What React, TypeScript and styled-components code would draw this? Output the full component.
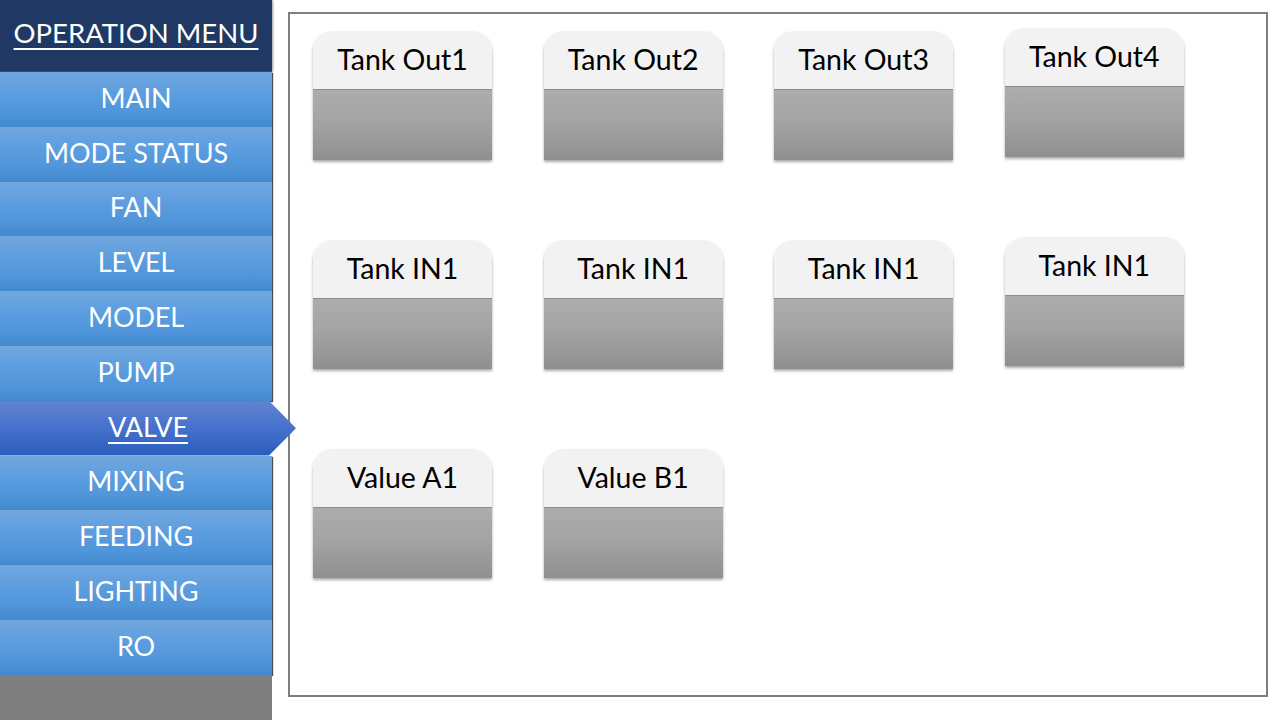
import styled, { createGlobalStyle } from "styled-components";

const GlobalStyle = createGlobalStyle`
  html, body {
    margin: 0;
    padding: 0;
    background: #ffffff;
    font-family: Lato, "Open Sans", "Liberation Sans", sans-serif;
  }
  * {
    box-sizing: border-box;
  }
`;

const menuItems = [
  "MAIN",
  "MODE STATUS",
  "FAN",
  "LEVEL",
  "MODEL",
  "PUMP",
  "VALVE",
  "MIXING",
  "FEEDING",
  "LIGHTING",
  "RO",
];

// raised: the last card in a row sits a few px higher in the original
const cards = [
  { id: 1, title: "Tank Out1" },
  { id: 2, title: "Tank Out2" },
  { id: 3, title: "Tank Out3" },
  { id: 4, title: "Tank Out4", raised: true },
  { id: 5, title: "Tank IN1" },
  { id: 6, title: "Tank IN1" },
  { id: 7, title: "Tank IN1" },
  { id: 8, title: "Tank IN1", raised: true },
  { id: 9, title: "Value A1" },
  { id: 10, title: "Value B1" },
];

export default function App() {
  const active = "VALVE";

  return (
    <>
      <GlobalStyle />
      <Screen>
        <Sidebar>
          <MenuHeader>
            <HeaderLabel>OPERATION MENU</HeaderLabel>
          </MenuHeader>
          {menuItems.map((item) => (
            <MenuItem key={item} $active={item === active}>
              <ItemLabel $active={item === active}>{item}</ItemLabel>
            </MenuItem>
          ))}
          <SidebarFooter />
        </Sidebar>
        <MainArea>
          <Panel>
            <CardGrid>
              {cards.map((card) => (
                <Card key={card.id} $raised={!!card.raised}>
                  <CardHeader>{card.title}</CardHeader>
                  <CardBody />
                </Card>
              ))}
            </CardGrid>
          </Panel>
        </MainArea>
      </Screen>
    </>
  );
}

const Screen = styled.div`
  display: flex;
  width: 1280px;
  height: 720px;
  overflow: hidden;
`;

// 왼쪽 메뉴
const Sidebar = styled.div`
  position: relative;
  z-index: 1;
  display: flex;
  flex-direction: column;
  width: 272px;
  flex-shrink: 0;
  height: 720px;
`;

const MenuHeader = styled.div`
  display: flex;
  justify-content: center;
  align-items: center;
  height: 72px;
  padding-bottom: 6px;
  background-color: #1f3864;
  border-bottom: 1px solid #3a4a66;
  box-shadow: 1px 0 2px rgba(0, 0, 0, 0.4);
`;

const HeaderLabel = styled.span`
  color: #ffffff;
  font-size: 27.5px;
  text-decoration: underline;
  text-underline-offset: 5px;
  text-decoration-thickness: 2px;
`;

const MenuItem = styled.div<{ $active: boolean }>`
  display: flex;
  justify-content: center;
  align-items: center;
  height: 54.8px;
  padding-bottom: 4px;
  flex-shrink: 0;
  width: ${(p) => (p.$active ? "296px" : "272px")};
  background: ${(p) =>
    p.$active
      ? "linear-gradient(to bottom, #6282d0 0%, #4873cc 45%, #3565c4 80%, #2c5cbb 100%)"
      : "linear-gradient(to bottom, #72a7de 0%, #5c9ddf 40%, #4f95da 75%, #4288cd 100%)"};
  box-shadow: ${(p) =>
    p.$active ? "none" : "1px 1px 1px rgba(0, 0, 0, 0.7)"};
  clip-path: ${(p) =>
    p.$active
      ? "polygon(0 0, 269px 0, 296px 50%, 269px 100%, 0 100%)"
      : "none"};
`;

const ItemLabel = styled.span<{ $active: boolean }>`
  color: #ffffff;
  font-size: 27px;
  letter-spacing: -0.1px;
  text-decoration: ${(p) => (p.$active ? "underline" : "none")};
  text-underline-offset: 5px;
  text-decoration-thickness: 2px;
`;

const SidebarFooter = styled.div`
  flex: 1;
  background-color: #7f7f7f;
`;

// 오른쪽 패널
const MainArea = styled.div`
  flex: 1;
  padding: 12px 12px 23px 16px;
`;

const Panel = styled.div`
  width: 100%;
  height: 100%;
  border: 2px solid #7f7f7f;
  background-color: #ffffff;
  padding: 17px 0 0 23px;
`;

const CardGrid = styled.div`
  display: grid;
  grid-template-columns: repeat(4, 179px);
  column-gap: 51.6px;
  row-gap: 80px;
`;

const Card = styled.div<{ $raised: boolean }>`
  display: flex;
  flex-direction: column;
  height: 129px;
  margin-top: ${(p) => (p.$raised ? "-3px" : "0")};
  margin-bottom: ${(p) => (p.$raised ? "3px" : "0")};
  border-radius: 20px 20px 0 0;
  overflow: hidden;
  box-shadow: 0 2px 3px rgba(0, 0, 0, 0.35);
`;

const CardHeader = styled.div`
  display: flex;
  justify-content: center;
  align-items: center;
  height: 59px;
  background-color: #f2f2f2;
  border-bottom: 1px solid #8c8c8c;
  color: #000000;
  font-size: 28.5px;
  padding-bottom: 2px;
`;

const CardBody = styled.div`
  flex: 1;
  background: linear-gradient(to bottom, #adadad 0%, #a2a2a2 50%, #8f8f8f 100%);
`;
